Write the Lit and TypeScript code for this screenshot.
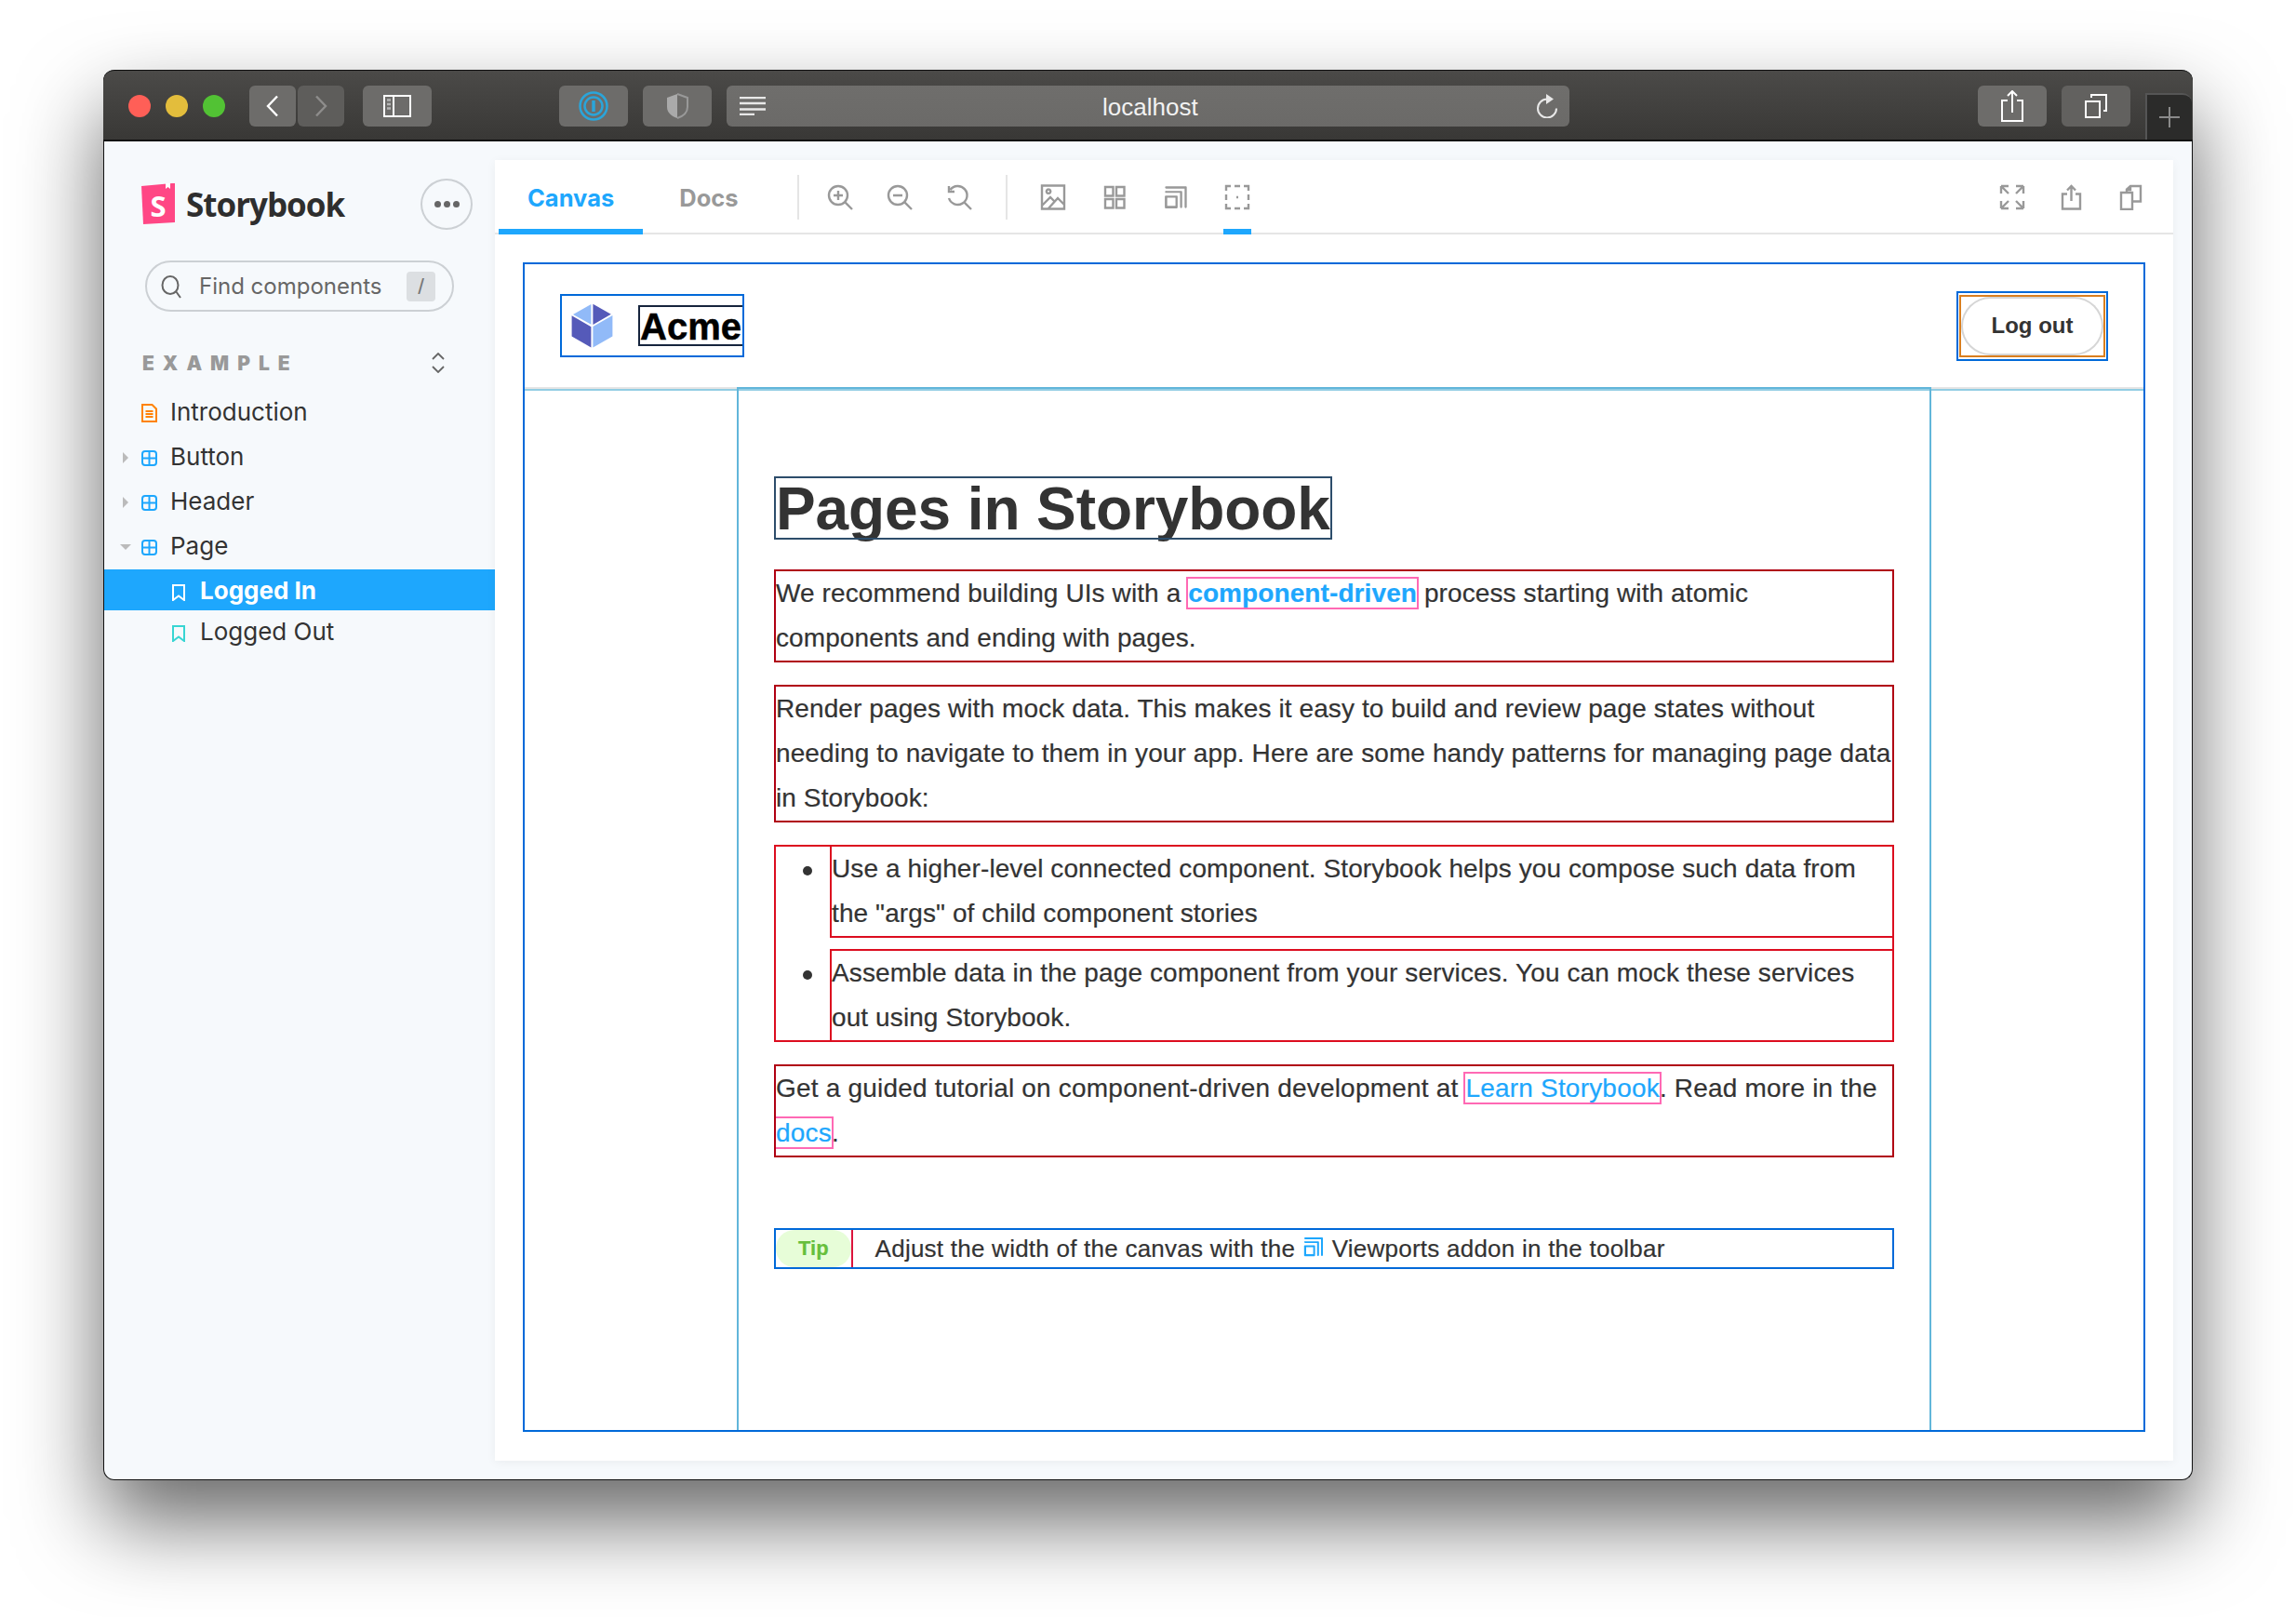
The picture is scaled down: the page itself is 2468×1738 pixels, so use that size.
import { css, html, LitElement } from "lit";
import { customElement } from "lit/decorators.js";

const line = (d: string) => html`<svg class="ico" viewBox="0 0 28 28"><path d=${d}></path></svg>`;

const viewportPath =
  "M1.5 5.2h4.8c.3 0 .5.2.5.4v5.1c-.1.2-.3.4-.4.4H1.4a.5.5 0 01-.5-.4V5.7c0-.3.2-.5.5-.5zm0-2.1h6.9c.3 0 .5.2.5.4v7a.5.5 0 01-1 0V4H1.5a.5.5 0 010-1zm0-2.1h9c.3 0 .5.2.5.4v9.1a.5.5 0 01-1 0V2H1.5a.5.5 0 010-1zm4.3 5.2H2V10h3.8V6.2z";

const icons = {
  zoomIn: line("M12 2a10 10 0 1 0 0 20a10 10 0 1 0 0-20M19.4 19.4L27 27M7 12h10M12 7v10"),
  zoomOut: line("M12 2a10 10 0 1 0 0 20a10 10 0 1 0 0-20M19.4 19.4L27 27M7 12h10"),
  reset: line("M4.5 6A10 10 0 1 1 3 15M19.4 19.4L27 27M3 2v6h6"),
  image: line("M2 1.5h24v25H2zM2 23l9-9 4 4M9 26l10-11 7 7M9 5.500a2.200 2.200 0 1 0 .1 0"),
  grid: line("M4 3h8.500v9.500H4zM16 3h8.500v9.500H16zM4 16h8.500v9.500H4zM16 16h8.500v9.500H16z"),
  outline: line("M2 7V2h5M11 2h6M21 2h5v5M26 11v6M26 21v5h-5M17 26h-6M7 26H2v-5M2 17v-6M13 14h2"),
  full: line(
    "M2 2h8M2 2v8M2 2l8 8M26 2h-8M26 2v8M26 2l-8 8M2 26h8M2 26v-8M2 26l8-8M26 26h-8M26 26v-8M26 26l-8-8"
  ),
  share: line("M9 10.500H4v16h19v-16h-5M13.500 18V2M9 6.500L13.500 2 18 6.500"),
  copy: line("M3 9h12v18H3zM9 9V5.500L13 2h11v16.500h-9M13 2v4H9"),
  viewport: html`<svg class="vp" viewBox="0 0 12 12"><path d=${viewportPath}></path></svg>`,
};

const grid = html`<svg class="node" viewBox="0 0 17 17">
  <rect x="1" y="1" width="15" height="15" rx="3"></rect>
  <path d="M8.500 1v15M1 8.500h15"></path>
</svg>`;

const bookmark = html`<svg class="mark" viewBox="0 0 14 18"><path d="M1 1h12v16L7 12.500 1 17z"></path></svg>`;

const tree = [
  { label: "Button", arrow: "right" },
  { label: "Header", arrow: "right" },
  { label: "Page", arrow: "down" },
];

@customElement("app-root")
export class AppRoot extends LitElement {
  render() {
    return html`
      <div class="window">
        <div class="titlebar">
          <i class="light red"></i><i class="light yellow"></i><i class="light green"></i>
          <span class="btn back"><svg viewBox="0 0 14 24"><path d="M12 1.500L2 12l10 10.500"></path></svg></span>
          <span class="btn forward"><svg viewBox="0 0 14 24"><path d="M2 1.500L12 12 2 22.500"></path></svg></span>
          <span class="btn side">
            <svg viewBox="0 0 30 24">
              <path d="M1 1h28v22H1zM11 1v22"></path>
              <path class="dim" d="M4 5.500h4M4 10h4M4 14.500h4"></path>
            </svg>
          </span>
          <span class="btn pass">
            <svg viewBox="0 0 32 32">
              <circle cx="16" cy="16" r="14.500"></circle>
              <circle cx="16" cy="16" r="9.500"></circle>
              <path d="M16 10v12"></path>
            </svg>
          </span>
          <span class="btn shield">
            <svg viewBox="0 0 24 28">
              <path class="half" d="M12 1L1 5v10c0 6 5 10 11 12z"></path>
              <path d="M12 1l11 4v10c0 6-5 10-11 12"></path>
            </svg>
          </span>
          <div class="address">
            <svg class="reader" viewBox="0 0 28 20"><path d="M0 1h28M0 7h28M0 13.500h28M0 19h16"></path></svg>
            <span class="host">localhost</span>
            <svg class="reload" viewBox="0 0 24 26">
              <path d="M12 5.500a10 10 0 1 0 10 10"></path>
              <path class="solid" d="M11 0l8 5.500-8 5.500z"></path>
            </svg>
          </div>
          <span class="btn win share">
            <svg viewBox="0 0 24 34"><path d="M7 11H1v22h22V11h-6M12 24V1M7 6l5-5 5 5"></path></svg>
          </span>
          <span class="btn win tabs">
            <svg viewBox="0 0 26 26"><path d="M2 8h15v17H2zM8 4V1h16v17h-3"></path></svg>
          </span>
          <span class="newtab"><svg viewBox="0 0 22 22"><path d="M11 0v22M0 11h22"></path></svg></span>
        </div>

        <div class="body">
          <aside class="sidebar">
            <div class="brand">
              <svg class="s-logo" viewBox="0 0 36 44">
                <path class="s-bg" d="M0 3l33-3 3 0v42l-34 2z"></path>
                <path class="s-notch" d="M26 0h5l0 6-2.500-2-2.500 2z"></path>
                <text x="18" y="36" text-anchor="middle">S</text>
              </svg>
              <span class="word">Storybook</span>
              <span class="dots"><i></i><i></i><i></i></span>
            </div>
            <div class="search">
              <svg viewBox="0 0 22 26"><path d="M10 2a8.500 9.500 0 1 0 0 19a8.500 9.500 0 1 0 0-19M16 18l5 7"></path></svg>
              <span>Find components</span>
              <kbd>/</kbd>
            </div>
            <div class="group">
              <span>EXAMPLE</span>
              <svg viewBox="0 0 14 22"><path d="M1 7l6-6 6 6M1 15l6 6 6-6"></path></svg>
            </div>
            <div class="row">
              <span class="arrow"></span>
              <svg class="doc" viewBox="0 0 17 20"><path d="M1 1h10.500L16 5.500V19H1zM4.500 8h8M4.500 11h8M4.500 14h8"></path></svg>
              Introduction
            </div>
            ${tree.map(
              (t) => html`<div class="row">
                <span class="arrow ${t.arrow}"></span>
                ${grid} ${t.label}
              </div>`
            )}
            <div class="row story selected">${bookmark} Logged In</div>
            <div class="row story">${bookmark} Logged Out</div>
          </aside>

          <main class="panel">
            <div class="toolbar">
              <span class="tab active">Canvas</span>
              <span class="tab">Docs</span>
              <span class="sep"></span>
              <span class="tool">${icons.zoomIn}</span>
              <span class="tool">${icons.zoomOut}</span>
              <span class="tool">${icons.reset}</span>
              <span class="sep two"></span>
              <span class="tool wide">${icons.image}</span>
              <span class="tool wide">${icons.grid}</span>
              <span class="tool wide">${icons.viewport}</span>
              <span class="tool wide on">${icons.outline}</span>
              <span class="tool push">${icons.full}</span>
              <span class="tool">${icons.share}</span>
              <span class="tool">${icons.copy}</span>
            </div>
            <div class="canvas">
              <div class="frame">
                <header>
                  <div class="acme box">
                    <svg width="64" height="64" viewBox="0 0 32 32">
                      <path d="M5.300 10.600l10.400 6v11.100l-10.400-6v-11zm11.400-6.200l9.700 5.500-9.700 5.600V4.400z" fill="#555AB9"></path>
                      <path d="M27.200 10.600v11.200l-10.500 6V16.500l10.500-6zM15.700 4.400v11L6 10l9.700-5.500z" fill="#91BAF8"></path>
                    </svg>
                    <h1>Acme</h1>
                  </div>
                  <div class="box logout"><button><span>Log out</span></button></div>
                </header>
                <article>
                  <section>
                    <h2>Pages in Storybook</h2>
                    <p>
                      We recommend building UIs with a
                      <a href="#"><strong>component-driven</strong></a> process starting with atomic
                      components and ending with pages.
                    </p>
                    <p>
                      Render pages with mock data. This makes it easy to build and review page states
                      without needing to navigate to them in your app. Here are some handy patterns for
                      managing page data in Storybook:
                    </p>
                    <ul>
                      <li>
                        Use a higher-level connected component. Storybook helps you compose such data
                        from the "args" of child component stories
                      </li>
                      <li>
                        Assemble data in the page component from your services. You can mock these
                        services out using Storybook.
                      </li>
                    </ul>
                    <p class="tutorial">
                      Get a guided tutorial on component-driven development at
                      <a href="#">Learn Storybook</a>. Read more in the <a href="#">docs</a>.
                    </p>
                    <div class="tip-wrapper">
                      <span class="tip"><span>Tip</span></span> Adjust the width of the canvas with the
                      <svg viewBox="0 0 12 12"><path d=${viewportPath}></path></svg>Viewports addon in the toolbar
                    </div>
                  </section>
                </article>
              </div>
            </div>
          </main>
        </div>
      </div>
    `;
  }

  static styles = css`
    :host {
      display: block;
      width: 2468px;
      height: 1738px;
      box-sizing: border-box;
      padding: 75px 0 0 111px;
      background: #fff;
      overflow: hidden;
      font-family: Inter, "Liberation Sans", sans-serif;
    }

    .window {
      width: 2246px;
      height: 1516px;
      box-sizing: border-box;
      border: 1px solid #111;
      border-top: 0;
      border-radius: 12px;
      display: flex;
      flex-direction: column;
      background: #f6f9fc;
      box-shadow: 0 44px 90px rgba(0, 0, 0, 0.6);
    }

    .titlebar {
      height: 77px;
      box-sizing: border-box;
      flex: none;
      border-top: 1px solid #111;
      border-bottom: 2px solid #111;
      border-radius: 12px 12px 0 0;
      margin: 0 -1px;
      padding: 16px 0 0 27px;
      background: linear-gradient(#4b4a48, #393836);
      display: flex;
      align-items: flex-start;
    }
    .light {
      width: 24px;
      height: 24px;
      border-radius: 50%;
      margin: 10px 16px 0 0;
    }
    .red { background: #ff5f57; }
    .yellow { background: #e3bd3c; }
    .green { background: #52c234; margin-right: 26px; }
    .btn {
      height: 44px;
      border-radius: 6px;
      background: #6d6c6a;
      display: flex;
      align-items: center;
      justify-content: center;
      flex: none;
    }
    .btn svg, .address svg, .newtab svg {
      fill: none;
      stroke: #fff;
      stroke-width: 2;
    }
    .back { width: 50px; }
    .back svg { width: 14px; height: 24px; stroke-width: 2.400; }
    .forward { width: 50px; margin-left: 2px; background: #5e5d5b; }
    .forward svg { width: 14px; height: 24px; stroke: #8e8d8c; stroke-width: 2.400; }
    .side { width: 74px; margin-left: 20px; }
    .side svg { width: 30px; height: 24px; }
    .side .dim { stroke: #b5b5b5; stroke-width: 2.500; }
    .pass { width: 74px; margin-left: 137px; }
    .pass svg { width: 32px; height: 32px; stroke: #2aa5da; stroke-width: 2.500; }
    .pass svg path { stroke-width: 3.500; stroke: #2aa5da; }
    .shield { width: 74px; margin-left: 16px; }
    .shield svg { width: 24px; height: 28px; stroke: #999; }
    .shield .half { fill: #aaa; stroke: none; }
    .address {
      width: 906px;
      height: 44px;
      margin-left: 16px;
      border-radius: 6px;
      background: linear-gradient(#6f6e6c, #6b6a68);
      display: flex;
      align-items: center;
      flex: none;
      box-sizing: border-box;
      padding: 0 12px 0 14px;
    }
    .reader { width: 28px; height: 20px; }
    .address .reader { stroke-width: 2.500; stroke: #e8e8e8; }
    .host {
      font: 26px "Liberation Sans", sans-serif;
      color: #f2f2f2;
      margin-left: 362px;
      padding-top: 2px;
    }
    .reload { width: 24px; height: 26px; margin-left: auto; }
    .address .reload { stroke: #e8e8e8; }
    .address .reload .solid { fill: #e8e8e8; stroke: none; }
    .win { width: 74px; background: #6d6c6a; }
    .win.share { margin-left: 439px; }
    .win.tabs { margin-left: 16px; background: #62615f; }
    .win.share svg { width: 24px; height: 34px; }
    .win.tabs svg { width: 26px; height: 26px; }
    .newtab {
      width: 50px;
      height: 50px;
      margin: 8px 0 0 16px;
      background: #2b2b2a;
      border: solid #555;
      border-width: 2px 0 0 2px;
      box-sizing: border-box;
      border-radius: 0 10px 0 0;
      display: flex;
      align-items: center;
      justify-content: center;
      flex: none;
    }
    .newtab svg { width: 22px; height: 22px; stroke: #8a8a8a; }

    .body {
      flex: 1;
      display: flex;
      min-height: 0;
    }

    .sidebar {
      width: 420px;
      flex: none;
      color: #333;
      font-size: 26px;
    }
    .brand {
      margin-top: 40px;
      padding: 0 24px 0 40px;
      display: flex;
      align-items: center;
    }
    .s-logo { width: 36px; height: 44px; margin-top: -2px; overflow: visible; }
    .s-bg { fill: #ff4785; }
    .s-notch { fill: #fff; }
    .s-logo text { font: 700 31px "Open Sans", sans-serif; fill: #fff; }
    .word {
      margin-left: 12px;
      font: 700 35px "Open Sans", sans-serif;
      letter-spacing: -1px;
      color: #2e2e2e;
    }
    .dots {
      margin-left: auto;
      width: 56px;
      height: 55px;
      box-sizing: border-box;
      border: 2px solid #ccd0d4;
      border-radius: 50%;
      display: flex;
      align-items: center;
      justify-content: center;
      gap: 3px;
    }
    .dots i {
      width: 7px;
      height: 7px;
      border-radius: 50%;
      background: #666;
    }
    .search {
      margin: 33px 0 0 44px;
      width: 332px;
      height: 55px;
      box-sizing: border-box;
      border: 2px solid #ccd0d4;
      border-radius: 28px;
      padding: 0 18px 0 15px;
      display: flex;
      align-items: center;
      color: #666;
      font-size: 24px;
    }
    .search svg {
      width: 22px;
      height: 26px;
      fill: none;
      stroke: #666;
      stroke-width: 2;
      margin-right: 19px;
    }
    .search kbd {
      margin-left: auto;
      width: 31px;
      height: 32px;
      background: #dcdfe2;
      border-radius: 4px;
      color: #777;
      font: 24px "Liberation Sans", sans-serif;
      text-align: center;
      line-height: 32px;
    }
    .group {
      margin-top: 30px;
      height: 50px;
      padding: 0 54px 0 41px;
      display: flex;
      align-items: center;
      justify-content: space-between;
      margin-bottom: 6px;
    }
    .group span {
      font-size: 21px;
      font-weight: 900;
      letter-spacing: 9px;
      color: #999;
    }
    .group svg {
      width: 14px;
      height: 22px;
      fill: none;
      stroke: #666;
      stroke-width: 1.800;
    }
    .row {
      height: 44px;
      box-sizing: border-box;
      margin-bottom: 4px;
      padding: 0 0 2px 17px;
      display: flex;
      align-items: center;
    }
    .arrow {
      width: 23px;
      height: 100%;
      flex: none;
      display: flex;
      align-items: center;
      margin-top: 4px;
    }
    .arrow.right::before {
      content: "";
      margin-left: 3px;
      border-left: 6px solid #bbb;
      border-top: 6px solid transparent;
      border-bottom: 6px solid transparent;
    }
    .arrow.down::before {
      content: "";
      border-top: 6px solid #bbb;
      border-left: 6px solid transparent;
      border-right: 6px solid transparent;
    }
    .doc, .node {
      width: 17px;
      flex: none;
      margin: 4px 14px 0 0;
      fill: none;
      stroke-width: 2;
    }
    .doc { height: 20px; stroke: #ff8300; }
    .node { height: 17px; stroke: #1ea7fd; }
    .mark {
      width: 14px;
      height: 18px;
      flex: none;
      margin: 6px 16px 0 0;
      fill: none;
      stroke: #37d5d3;
      stroke-width: 2;
    }
    .row.story {
      padding: 0 0 0 73px;
      margin: 0;
    }
    .row.selected {
      margin-top: -1px;
      background: #1ea7fd;
      color: #fff;
      font-weight: 700;
    }
    .selected .mark { stroke: #fff; }

    .panel {
      flex: 1;
      margin: 20px 20px 20px 0;
      background: #fff;
      box-shadow: 0 2px 10px rgba(0, 0, 0, 0.05);
      display: flex;
      flex-direction: column;
      min-width: 0;
    }
    .toolbar {
      height: 80px;
      flex: none;
      box-sizing: border-box;
      padding: 0 13px 0 4px;
      display: flex;
      align-items: center;
      box-shadow: inset 0 -2px 0 #e5e5e5;
    }
    .tab {
      height: 100%;
      box-sizing: border-box;
      padding: 0 31px;
      margin-right: 8px;
      display: flex;
      align-items: center;
      font-size: 25.500px;
      font-weight: 700;
      color: #999;
    }
    .tab.active {
      color: #1ea7fd;
      box-shadow: inset 0 -6px 0 #1ea7fd;
    }
    .sep {
      width: 2px;
      height: 48px;
      margin: 0 12px 0 24px;
      background: #e5e5e5;
      flex: none;
    }
    .sep.two { margin: 0 16px 0 18px; }
    .tool {
      position: relative;
      width: 64px;
      height: 100%;
      flex: none;
      display: flex;
      align-items: center;
      justify-content: center;
    }
    .tool.wide { width: 66px; }
    .tool.push { margin-left: auto; }
    .ico {
      width: 28px;
      height: 28px;
      fill: none;
      stroke: #999;
      stroke-width: 2.400;
    }
    .vp { width: 28px; height: 28px; fill: #999; }
    .tool.on::after {
      content: "";
      position: absolute;
      left: 18px;
      bottom: 0;
      width: 30px;
      height: 6px;
      background: #1ea7fd;
    }

    .canvas {
      flex: 1;
      padding: 32px 32px 33px;
      display: flex;
      min-height: 0;
    }
    .frame {
      flex: 1;
      display: flex;
      flex-direction: column;
      outline: 2px solid #0069d9;
      font-family: "Liberation Sans", Arial, sans-serif;
      color: #333;
    }
    header {
      height: 134px;
      flex: none;
      box-sizing: border-box;
      border-bottom: 2px solid #e5e5e5;
      padding: 0 40px;
      display: flex;
      align-items: center;
      justify-content: space-between;
    }
    .box { outline: 2px solid #0069d9; }
    .acme {
      width: 194px;
      height: 64px;
      display: flex;
    }
    .acme h1 {
      margin: 12px 0 12px 20px;
      height: 40px;
      width: 110px;
      font-size: 40px;
      font-weight: 900;
      line-height: 42px;
      color: #000;
      -webkit-text-stroke: 0.5px #000;
      outline: 2px solid #16243d;
    }
    .logout {
      padding: 4px 3px;
      height: 71px;
      box-sizing: border-box;
    }
    button {
      display: block;
      width: 153px;
      height: 63px;
      padding: 0;
      border: 0;
      background: transparent;
      outline: 2px solid #d97e1e;
      font: 700 24px "Liberation Sans", Arial, sans-serif;
      color: #333;
    }
    button span {
      height: 100%;
      display: flex;
      align-items: center;
      justify-content: center;
      border-radius: 32px;
      box-shadow: inset 0 0 0 2px #d6d6d6;
    }
    article {
      flex: 1;
      display: flex;
      flex-direction: column;
      border-top: 2px solid #92cde3;
      min-height: 0;
    }
    section {
      flex: 1;
      width: 1280px;
      margin: -2px auto 0;
      box-sizing: border-box;
      padding: 96px 40px 0;
      outline: 2px solid #62b6da;
      font-size: 28px;
      line-height: 48px;
      letter-spacing: 0.1px;
      -webkit-text-stroke: 0.2px;
    }
    h2 {
      width: fit-content;
      height: 64px;
      margin: 0 0 36px;
      font-size: 64px;
      font-weight: 700;
      line-height: 67px;
      letter-spacing: -0.1px;
      -webkit-text-stroke: 0;
      outline: 2px solid #2d4d6b;
    }
    p {
      margin: 28px 0;
      outline: 2px solid #b00012;
    }
    p.tutorial { letter-spacing: 0.2px; }
    ul {
      margin: 28px 0;
      padding-left: 60px;
      list-style: none;
      outline: 2px solid #dc0d1f;
    }
    li {
      position: relative;
      margin-bottom: 16px;
      outline: 2px solid #dc0d1f;
    }
    li::before {
      content: "";
      position: absolute;
      left: -31px;
      top: 21px;
      width: 10px;
      height: 10px;
      border-radius: 50%;
      background: #333;
    }
    li:last-child { margin-bottom: 0; }
    h2 + p { margin-top: 0; }
    a {
      color: #1ea7fd;
      text-decoration: none;
      outline: 2px solid #ff69b4;
    }
    strong { font-weight: 700; }
    .tip-wrapper {
      margin-top: 80px;
      font-size: 26px;
      line-height: 40px;
      letter-spacing: 0.24px;
      outline: 2px solid #0069d9;
    }
    .tip {
      display: inline-block;
      margin-right: 20px;
      vertical-align: top;
      box-shadow: 2px 0 0 #dc143c;
      letter-spacing: 0;
    }
    .tip span {
      display: block;
      border-radius: 2em;
      font-size: 22px;
      line-height: 24px;
      font-weight: 700;
      background: #e7fdd8;
      color: #66bf3c;
      padding: 8px 24px;
    }
    .tip-wrapper svg {
      display: inline-block;
      width: 24px;
      height: 24px;
      margin: 6px 8px 0 0;
      vertical-align: top;
      fill: #1ea7fd;
    }
  `;
}
